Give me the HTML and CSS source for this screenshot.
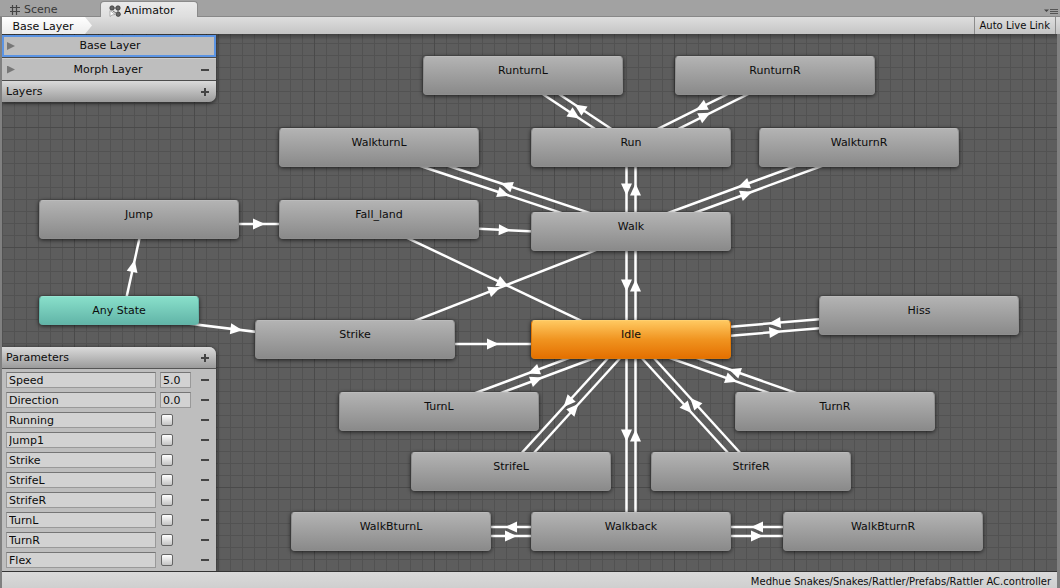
FILE: index.html
```
<!DOCTYPE html>
<html lang="en">
<head>
<meta charset="utf-8">
<title>Animator</title>
<link rel="stylesheet" href="styles.css">
</head>
<body>
<div class="window">
  <nav class="tabs">
    <button class="tab" type="button">
      <svg class="tab-icon" width="12" height="12" viewBox="0 0 12 12" aria-hidden="true"><path d="M3.500 1v10M7.500 1v10M1 3.500h10M1 7.500h10" stroke="#444" stroke-width="1.2" fill="none"/></svg>
      <span>Scene</span>
    </button>
    <button class="tab tab-active" type="button">
      <svg class="tab-icon" width="12" height="12" viewBox="0 0 12 12" aria-hidden="true"><g fill="#666" stroke="#333" stroke-width=".7"><circle cx="3" cy="3" r="2.200"/><circle cx="9" cy="3" r="2.200"/><circle cx="9.200" cy="9.200" r="2.200"/></g><path d="M5 3h2M9 5v2M4 6l3 2" stroke="#555" stroke-width=".8" fill="none"/><path d="M1 5.500v6l2-1.500 3-.5z" fill="#fff" stroke="#888" stroke-width=".6"/></svg>
      <span>Animator</span>
    </button>
    <button class="pane-menu" type="button" aria-label="Pane menu">
      <svg width="14" height="7" viewBox="0 0 14 7"><path d="M0 1.500h5L2.500 4z" fill="#444"/><path d="M6 1.500h8M6 3.500h8M6 5.500h8" stroke="#555" fill="none"/></svg>
    </button>
  </nav>
  <header class="toolbar">
    <button class="crumb" type="button">Base Layer</button>
    <button class="live-link" type="button">Auto Live Link</button>
  </header>
  <main class="canvas">
    <svg class="links" aria-hidden="true"></svg>
    <div class="nodes"></div>
    <section class="panel layers">
      <button class="layer layer-selected" type="button"><span class="fold"></span><span class="layer-name">Base Layer</span></button>
      <div class="layer"><span class="fold"></span><span class="layer-name">Morph Layer</span><button class="sign" type="button" aria-label="Remove Morph Layer"></button></div>
      <div class="panel-bar panel-bar-bottom"><span>Layers</span><button class="sign plus" type="button" aria-label="Add layer"></button></div>
    </section>
    <section class="panel params">
      <div class="panel-bar panel-bar-top"><span>Parameters</span><button class="sign plus" type="button" aria-label="Add parameter"></button></div>
      <div class="param-list"></div>
    </section>
  </main>
  <footer class="status">Medhue Snakes/Snakes/Rattler/Prefabs/Rattler AC.controller</footer>
</div>
<script src="graph.js"></script>
</body>
</html>
```
FILE: styles.css
```
* { box-sizing: border-box; }
body {
  margin: 0;
  font: 11px/16px "DejaVu Sans", Verdana, sans-serif;
  color: #0c0c0c;
}
button, input {
  margin: 0;
  padding: 0;
  border: 0;
  background: none;
  font: inherit;
  color: inherit;
}
.window {
  display: flex;
  flex-direction: column;
  min-height: 100vh;
  padding-right: 3px;
  padding-left: 2px;
  background: #808080;
}
.tabs {
  display: flex;
  height: 17px;
  margin: 0 -3px 0 -2px;
  padding-left: 2px;
  background: #a2a2a2;
  border-bottom: 1px solid #888;
}
.tab {
  display: flex;
  align-items: center;
  gap: 3px;
  width: 98px;
  padding: 4px 0 0 7px;
  color: #383838;
}
.tab-icon { flex: none; }
.tab-active {
  height: 16px;
  margin-top: 1px;
  padding: 2px 0 0 8px;
  border: 1px solid #8a8a8a;
  border-bottom: 0;
  border-radius: 4px 4px 0 0;
  background: linear-gradient(#eaeaea, #dedede);
  color: #0c0c0c;
}
.pane-menu {
  display: flex;
  align-items: flex-end;
  margin-left: auto;
  padding: 0 2px 1px 0;
}
.toolbar {
  display: flex;
  justify-content: space-between;
  height: 17px;
  margin-right: -3px;
  padding-right: 4px;
  background: linear-gradient(#dedede, #c4c4c4);
}
.crumb {
  width: 90px;
  padding: 2px 8px 0 0;
  background: linear-gradient(#fff, #ececec);
  clip-path: polygon(0 0, 83px 0, 100% 50%, 83px 100%, 0 100%);
}
.live-link {
  padding: 1px 5px 0;
  border: solid #8c8c8c;
  border-width: 0 1px;
  font-size: 10px;
}
.canvas {
  position: relative;
  flex: 1;
  overflow: hidden;
  display: flex;
  flex-direction: column;
  justify-content: space-between;
  align-items: flex-start;
  min-height: 538px;
  border-bottom: 1px solid #333;
  background:
    linear-gradient(rgba(0, 0, 0, .3), transparent 6px),
    linear-gradient(90deg, #4a4a4a 1px, transparent 1px) 72px 0 / 120px 120px,
    linear-gradient(#4a4a4a 1px, transparent 1px) 0 93px / 120px 120px,
    linear-gradient(90deg, #525252 1px, transparent 1px) 0 0 / 12px 12px,
    linear-gradient(#525252 1px, transparent 1px) 0 9px / 12px 12px,
    #5d5d5d;
}
.links, .nodes {
  position: absolute;
  inset: 0;
  width: 100%;
  height: 100%;
}
.link { stroke: #fff; stroke-width: 2.5; }
.arrow { fill: #fff; }
.node {
  position: absolute;
  width: 200px;
  height: 39px;
  padding-bottom: 9px;
  border-radius: 4px;
  border: 1px solid #8e8e8e;
  border-top-color: #bbb;
  background: linear-gradient(#b3b3b3, #8a8a8a);
  box-shadow: 0 1px 4px rgba(0, 0, 0, .7);
}
.node-default {
  border-color: #de7808;
  border-top-color: #ffd070;
  background: linear-gradient(#ffc860, #f09420 50%, #e47000);
}
.node-any {
  width: 160px;
  height: 29px;
  padding-bottom: 0;
  border-color: #64b4a8;
  border-top-color: #98e4d2;
  background: linear-gradient(#88dfca, #62b5a8);
}
.panel {
  position: relative;
  width: 214px;
  background: #bebebe;
  box-shadow: 0 1px 4px rgba(0, 0, 0, .7);
}
.layers {
  display: flex;
  flex-direction: column;
  border-radius: 0 0 7px 0;
  margin-top: 1px;
  background: #4c4c4c;
}
.layer {
  display: flex;
  align-items: center;
  width: 100%;
  height: 22px;
  margin-bottom: 1px;
  padding: 0 7px 0 5px;
  border-top: 1px solid #d0d0d0;
  background: #bebebe;
}
.layer-selected {
  border: 2px solid #5b94e4;
  padding: 0 9px 0 3px;
}
.layer-name { flex: 1; text-align: center; }
.fold {
  width: 8px;
  height: 8px;
  background: #777;
  clip-path: polygon(0 0, 100% 50%, 0 100%);
}
.panel-bar {
  display: flex;
  align-items: center;
  justify-content: space-between;
  height: 21px;
  padding: 1px 7px 0 4px;
  background: linear-gradient(#dadada, #9b9b9b);
}
.panel-bar-bottom { border-radius: 0 0 7px 0; }
.panel-bar-top {
  height: 22px;
  border-bottom: 1px solid #555;
  border-radius: 0 7px 0 0;
}
.sign {
  width: 8px;
  height: 8px;
  background: linear-gradient(#444, #444) center / 8px 2px no-repeat;
}
.plus {
  background:
    linear-gradient(#444, #444) center / 8px 2px no-repeat,
    linear-gradient(#444, #444) center / 2px 8px no-repeat;
}
.params { border-radius: 0 7px 0 0; }
.param-list {
  display: grid;
  gap: 4px;
  padding: 3px 7px 3px 4px;
}
.param {
  display: grid;
  grid-template-columns: 150px 31px 1fr;
  column-gap: 4px;
  align-items: center;
  height: 16px;
}
.param .sign { justify-self: end; }
.param-name, .param-value {
  width: 100%;
  height: 16px;
  padding: 1px 2px 0;
  border: 1px solid #999;
  border-top-color: #757575;
  background: #d2d2d2;
}
.param-check {
  appearance: none;
  width: 12px;
  height: 12px;
  margin-left: 1px;
  border: 1px solid #666;
  border-radius: 2px;
  background: linear-gradient(#fff, #c4c4c4);
}
.status {
  height: 16px;
  padding: 3px 6px 0 0;
  overflow: hidden;
  background: linear-gradient(#dadada, #cfcfcf);
  font-size: 10px;
  line-height: 14px;
  text-align: right;
}
```
FILE: graph.js
```
const nodes = {
  RunturnL: [421, 22], RunturnR: [673, 22],
  WalkturnL: [277, 94], Run: [529, 94], WalkturnR: [757, 94],
  Jump: [37, 166], Fall_land: [277, 166], Walk: [529, 178],
  "Any State": [37, 262], Strike: [253, 286], Idle: [529, 286], Hiss: [817, 262],
  TurnL: [337, 358], TurnR: [733, 358],
  StrifeL: [409, 418], StrifeR: [649, 418],
  WalkBturnL: [289, 478], Walkback: [529, 478], WalkBturnR: [781, 478]
};
const twoWay = [
  ["Run", "RunturnL"], ["Run", "RunturnR"], ["Walk", "Run"],
  ["Walk", "WalkturnL"], ["Walk", "WalkturnR"], ["Idle", "Walk"],
  ["Idle", "Hiss"], ["Idle", "TurnL"], ["Idle", "TurnR"],
  ["Idle", "StrifeL"], ["Idle", "StrifeR"], ["Idle", "Walkback"],
  ["Walkback", "WalkBturnL"], ["Walkback", "WalkBturnR"]
];
const oneWay = [
  ["Jump", "Fall_land"], ["Fall_land", "Walk"], ["Fall_land", "Idle"],
  ["Strike", "Walk"], ["Strike", "Idle"], ["Any State", "Jump"], ["Any State", "Strike"]
];

const layer = document.querySelector(".nodes");
for (const [name, [x, y]] of Object.entries(nodes)) {
  const node = document.createElement("button");
  node.type = "button";
  node.className = "node";
  if (name === "Idle") node.classList.add("node-default");
  if (name === "Any State") node.classList.add("node-any");
  node.textContent = name;
  node.style.left = x + "px";
  node.style.top = y + "px";
  layer.append(node);
}

const svg = document.querySelector(".links");
function add(tag, attrs) {
  const el = document.createElementNS("http://www.w3.org/2000/svg", tag);
  for (const key in attrs) el.setAttribute(key, attrs[key]);
  svg.append(el);
}
function center(name) {
  const [x, y] = nodes[name];
  return name === "Any State" ? [x + 80, y + 14.5] : [x + 100, y + 19.5];
}
// Each transition runs on the right-hand side of the line between two centers.
function link(from, to) {
  const [ax, ay] = center(from);
  const [bx, by] = center(to);
  const length = Math.hypot(bx - ax, by - ay);
  const ux = (bx - ax) / length;
  const uy = (by - ay) / length;
  const ox = -uy * 4.5;
  const oy = ux * 4.5;
  add("line", { class: "link", x1: ax + ox, y1: ay + oy, x2: bx + ox, y2: by + oy });
  const angle = Math.atan2(uy, ux) * 180 / Math.PI;
  const mx = (ax + bx) / 2 + ox;
  const my = (ay + by) / 2 + oy;
  add("path", { class: "arrow", d: "M-6-5.500L6 0L-6 5.500z", transform: `translate(${mx} ${my}) rotate(${angle})` });
}
twoWay.forEach(([a, b]) => { link(a, b); link(b, a); });
oneWay.forEach(([a, b]) => link(a, b));

const params = [
  ["Speed", "5.0"], ["Direction", "0.0"], ["Running"], ["Jump1"], ["Strike"],
  ["StrifeL"], ["StrifeR"], ["TurnL"], ["TurnR"], ["Flex"]
];
document.querySelector(".param-list").innerHTML = params.map(([name, value]) => `
  <div class="param">
    <input class="param-name" type="text" value="${name}" aria-label="Parameter name">
    ${value
      ? `<input class="param-value" type="text" value="${value}" aria-label="${name} value">`
      : `<input class="param-check" type="checkbox" aria-label="${name} value">`}
    <button class="sign" type="button" aria-label="Remove ${name}"></button>
  </div>`).join("");
```
